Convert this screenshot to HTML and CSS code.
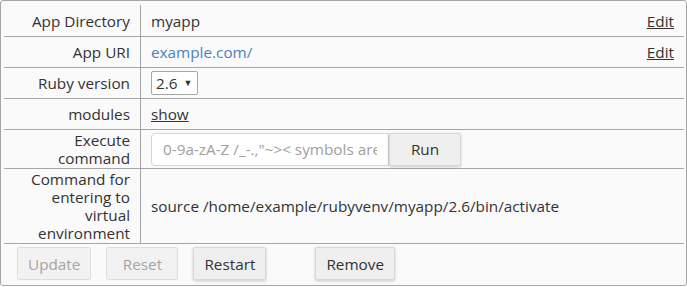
FILE: index.html
```html
<!DOCTYPE html>
<html>
<head>
    <meta charset="UTF-8">
    <title>Ruby App</title>
    <link rel="stylesheet" href="styles.css">
</head>
<body>
<div class="panel">
    <table class="info">
        <tr class="first">
            <th>App Directory</th>
            <td><div class="split"><span>myapp</span><a href="#" class="edit">Edit</a></div></td>
        </tr>
        <tr>
            <th>App URI</th>
            <td><div class="split"><a href="#" class="uri">example.com/</a><a href="#" class="edit">Edit</a></div></td>
        </tr>
        <tr>
            <th>Ruby version</th>
            <td><span class="version">2.6<span class="arrow">&#9660;</span></span></td>
        </tr>
        <tr>
            <th>modules</th>
            <td><a href="#" class="show">show</a></td>
        </tr>
        <tr class="exec">
            <th>Execute command</th>
            <td>
                <div class="cmd">
                    <input type="text" placeholder='0-9a-zA-Z /_-.,"~&gt;&lt; symbols are allowed'>
                    <button class="btn">Run</button>
                </div>
            </td>
        </tr>
        <tr class="last">
            <th>Command for entering to virtual environment</th>
            <td>source /home/example/rubyvenv/myapp/2.6/bin/activate</td>
        </tr>
    </table>
    <div class="actions">
        <button class="btn" disabled>Update</button>
        <button class="btn" disabled>Reset</button>
        <button class="btn">Restart</button>
        <button class="btn btn-remove">Remove</button>
    </div>
</div>
</body>
</html>
```

FILE: styles.css
```css
/* page */
body {
    margin: 0;
    font-family: "Open Sans", "Liberation Sans", sans-serif;
    font-size: 15.3px;
    line-height: 18px;
    color: #333;
}

.panel {
    width: 687px;
    height: 286px;
    box-sizing: border-box;
    border: 1px solid #a6a6a6;
    border-radius: 3px;
    background-color: #fafafa;
    padding: 4px 2px 0 3px;
}

/* table */
.info {
    width: 100%;
    border-collapse: separate;
    border-spacing: 0;
}
.info th, .info td {
    box-sizing: border-box;
    height: 31px;
    border-bottom: 1px solid #a6a6a6;
    vertical-align: middle;
    text-align: left;
    font-weight: normal;
}
.info th {
    width: 137px;
    padding: 1px 10px 1px 20px;
    border-right: 1px solid #a6a6a6;
    text-align: right;
}
.info td {
    padding: 2px 10px;
}
.info .first th, .info .first td {
    height: 32px;
}
.info .exec th, .info .exec td {
    height: 39px;
}
.info .last th, .info .last td {
    height: 75px;
}

.split {
    display: flex;
    justify-content: space-between;
}
a {
    color: #333;
}
.uri {
    color: #4a7fc1;
    text-decoration: none;
}

/* select */
.version {
    display: inline-flex;
    align-items: center;
    height: 24px;
    box-sizing: border-box;
    padding: 0 5px 0 4px;
    border: 1px solid #a6a6a6;
    border-radius: 2px;
    background-color: #fff;
}
.arrow {
    font-size: 9px;
    margin-left: 6px;
}

/* command */
.cmd {
    display: flex;
}
.cmd input {
    width: 238px;
    height: 33px;
    box-sizing: border-box;
    border: 1px solid #d5d5d5;
    border-radius: 4px 0 0 4px;
    padding: 0 11px;
    font-family: inherit;
    font-size: 15.3px;
    color: #333;
    background-color: #fff;
}
.cmd input::placeholder {
    color: #a0a0a0;
}
.cmd .btn {
    width: 72px;
}

/* buttons */
.btn {
    height: 33px;
    min-width: 72px;
    padding: 0 10px;
    box-sizing: border-box;
    border: 1px solid #d8d8d8;
    border-radius: 2px;
    background-color: #efefef;
    box-shadow: 0 1px 3px rgba(0, 0, 0, 0.2);
    font-family: inherit;
    font-size: 15.3px;
    color: #333;
}
.btn:disabled {
    background-color: #f2f2f2;
    color: #a5a5a5;
    border-color: #dedede;
    box-shadow: none;
}

.actions {
    display: flex;
    gap: 15px;
    padding: 3px 0 0 13px;
}
.actions .btn-remove {
    margin-left: 34px;
}
```
